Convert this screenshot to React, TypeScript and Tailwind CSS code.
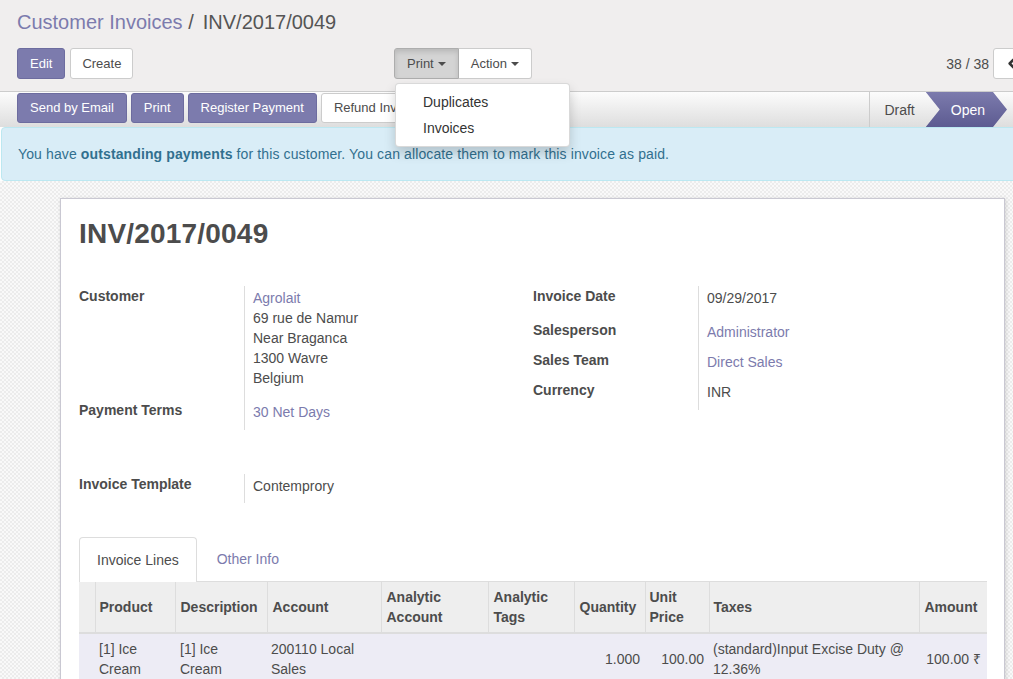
import React from "react";
import { ChevronLeft, ChevronRight } from "lucide-react";

const Caret = () => (
  <span className="ml-[4px] inline-block h-0 w-0 border-x-[4px] border-t-[4px] border-x-transparent border-t-[#4c4c4c] align-middle" />
);

const purpleBtn =
  "h-[30px] rounded-[3px] border border-[#6d6c9f] bg-[#7c7bad] px-[12px] text-[13px] text-white";
const whiteBtn =
  "h-[30px] rounded-[3px] border border-[#ccc] bg-white px-[12px] text-[13px] text-[#4c4c4c]";

const Field = ({
  label,
  children,
  pt,
  pb,
  lpt,
  lpb,
}: {
  label: string;
  children: React.ReactNode;
  pt: string;
  pb: string;
  lpt: string;
  lpb: string;
}) => (
  <div className="flex">
    <div className={`w-[165px] shrink-0 font-bold ${lpt} ${lpb}`}>{label}</div>
    <div className={`border-l border-[#ddd] pl-[8px] ${pt} ${pb}`}>{children}</div>
  </div>
);

const link = "text-[#7c7bad]";

export default function App() {
  return (
    <div className="relative h-[679px] w-[1013px] overflow-hidden bg-white font-['Liberation_Sans',Arial,sans-serif] text-[14px] leading-[20px] text-[#4c4c4c]">
      {/* control panel */}
      <div className="border-b border-[#ccc] bg-[#f0eeee] pb-[12px] pl-[17px] pr-[17px] pt-[8px]">
        <div className="h-[28px] text-[20px] leading-[28px]">
          <span className="text-[#7c7bad]">Customer Invoices</span>
          <span className="text-[#555]"> /</span>
          <span className="ml-[9px] text-[#555]">INV/2017/0049</span>
        </div>
        <div className="mt-[12px] flex h-[31px] items-stretch">
          <div className="flex w-[377px] gap-[5px]">
            <button className="h-[31px] rounded-[3px] border border-[#6d6c9f] bg-[#7c7bad] px-[12px] text-[13px] text-white">Edit</button>
            <button className="h-[31px] rounded-[3px] border border-[#ccc] bg-white px-[11px] text-[13px] text-[#4c4c4c]">Create</button>
          </div>
          <div className="flex">
            <button className="flex h-[31px] items-center rounded-l-[3px] border border-[#adadad] bg-[#d4d4d4] px-[12px] text-[13px] shadow-[inset_0_3px_5px_rgba(0,0,0,0.125)]">
              Print
              <Caret />
            </button>
            <button className="flex h-[31px] items-center rounded-r-[3px] border border-l-0 border-[#ccc] bg-white px-[12px] text-[13px]">
              Action
              <Caret />
            </button>
          </div>
          <div className="-mr-[71px] ml-auto flex items-center">
            <span className="mr-[4px] text-[14px]">38 / 38</span>
            <button className="flex h-[31px] w-[37px] items-center justify-center rounded-l-[3px] border border-[#ccc] bg-white">
              <ChevronLeft size={15} strokeWidth={4} className="text-[#333]" />
            </button>
            <button className="flex h-[31px] w-[37px] items-center justify-center rounded-r-[3px] border border-l-0 border-[#ccc] bg-white">
              <ChevronRight size={15} strokeWidth={4} className="text-[#333]" />
            </button>
          </div>
        </div>
      </div>

      {/* status bar */}
      <div className="flex h-[35px] bg-gradient-to-b from-[#fcfcfc] to-[#dedede] pl-[17px]">
        <div className="flex gap-[4px] pt-[1px]">
          <button className={purpleBtn}>Send by Email</button>
          <button className={purpleBtn}>Print</button>
          <button className={purpleBtn}>Register Payment</button>
          <button className={whiteBtn}>Refund Invoice</button>
        </div>
        <div className="ml-auto mr-[6px] flex h-full">
          <div className="flex items-center border-l border-[#ccc] pl-[14px] pr-[11px]">Draft</div>
          <div className="flex items-center bg-gradient-to-b from-[#7c7bad] to-[#5d5b91] pl-[25px] pr-[22px] text-white [clip-path:polygon(0_0,calc(100%-14px)_0,100%_50%,calc(100%-14px)_100%,0_100%,14px_50%)]">
            Open
          </div>
        </div>
      </div>

      {/* alert */}
      <div className="-mr-[10px] ml-[1px] flex h-[54px] items-center rounded-[4px] border border-[#bce8f1] bg-[#d9edf7] px-[16px] tracking-[0.12px] text-[#31708f]">
        <span>
          You have <b>outstanding payments</b> for this customer. You can allocate them to mark this invoice as paid.
        </span>
      </div>

      {/* sheet background */}
      <div className="h-[600px] bg-[repeating-conic-gradient(#ececec_0%_25%,#f9f9f9_0%_50%)] bg-size-[4px_4px] bg-[length:4px_4px] pl-[60px] pt-[17px]">
        <div className="h-[600px] w-[945px] border border-[#c9c8d2] bg-white px-[18px] pt-[18px] shadow-[1px_1px_4px_rgba(0,0,0,0.15)]">
          <h1 className="text-[28px] font-bold leading-[34px] tracking-[0.2px]">INV/2017/0049</h1>

          <div className="mt-[35px] flex">
            <div className="w-[454px]">
              <Field label="Customer" pt="pt-[2px]" pb="pb-[7px]" lpt="pt-0" lpb="pb-[9px]">
                <div className={link}>Agrolait</div>
                <div>69 rue de Namur</div>
                <div>Near Braganca</div>
                <div>1300 Wavre</div>
                <div>Belgium</div>
              </Field>
              <Field label="Payment Terms" pt="pt-[7px]" pb="pb-[8px]" lpt="pt-[5px]" lpb="pb-[10px]">
                <span className={link}>30 Net Days</span>
              </Field>
            </div>
            <div>
              <Field label="Invoice Date" pt="pt-[2px]" pb="pb-[7px]" lpt="pt-0" lpb="pb-[9px]">
                09/29/2017
              </Field>
              <Field label="Salesperson" pt="pt-[7px]" pb="pb-[5px]" lpt="pt-[5px]" lpb="pb-[7px]">
                <span className={link}>Administrator</span>
              </Field>
              <Field label="Sales Team" pt="pt-[5px]" pb="pb-[5px]" lpt="pt-[3px]" lpb="pb-[7px]">
                <span className={link}>Direct Sales</span>
              </Field>
              <Field label="Currency" pt="pt-[5px]" pb="pb-[8px]" lpt="pt-[3px]" lpb="pb-[10px]">
                INR
              </Field>
            </div>
          </div>

          <div className="mt-[44px] w-[454px]">
            <Field label="Invoice Template" pt="pt-[2px]" pb="pb-[7px]" lpt="pt-0" lpb="pb-[9px]">
              Contemprory
            </Field>
          </div>

          {/* tabs */}
          <div className="mt-[34px] flex h-[45px] w-[908px] border-b border-[#ddd]">
            <div className="-mb-[1px] flex items-center rounded-t-[4px] border border-b-0 border-[#ddd] bg-white px-[17px]">
              Invoice Lines
            </div>
            <div className="flex items-center pl-[20px] text-[#7c7bad]">Other Info</div>
          </div>

          <table className="w-[908px] table-fixed border-collapse">
            <colgroup>
              <col className="w-[16px]" />
              <col className="w-[80px]" />
              <col className="w-[92px]" />
              <col className="w-[114px]" />
              <col className="w-[107px]" />
              <col className="w-[86px]" />
              <col className="w-[71px]" />
              <col className="w-[64px]" />
              <col className="w-[210px]" />
              <col className="w-[68px]" />
            </colgroup>
            <thead>
              <tr className="h-[51px] border-b-2 border-[#ddd] bg-[#eee] text-left font-bold">
                <th className="" />
                <th className="border-l border-[#ddd] px-[4px]">Product</th>
                <th className="border-l border-[#ddd] px-[5px]">Description</th>
                <th className="border-l border-[#ddd] px-[5px]">Account</th>
                <th className="border-l border-[#ddd] px-[5px]">Analytic Account</th>
                <th className="border-l border-[#ddd] px-[5px]">Analytic Tags</th>
                <th className="border-l border-[#ddd] px-[5px]">Quantity</th>
                <th className="border-l border-[#ddd] px-[4px]">Unit Price</th>
                <th className="border-l border-[#ddd] px-[4px]">Taxes</th>
                <th className="border-l border-[#ddd] px-[5px]">Amount</th>
              </tr>
            </thead>
            <tbody>
              <tr className="bg-[#edecf5] align-middle">
                <td />
                <td className="px-[4px] py-[5px]">[1] Ice Cream</td>
                <td className="px-[5px] py-[5px]">[1] Ice Cream</td>
                <td className="px-[4px] py-[5px]">200110 Local Sales</td>
                <td className="px-[6px] py-[5px]" />
                <td className="px-[6px] py-[5px]" />
                <td className="px-[5px] py-[5px] text-right">1.000</td>
                <td className="px-[5px] py-[5px] text-right">100.00</td>
                <td className="px-[4px] py-[5px]">(standard)Input Excise Duty @ 12.36%</td>
                <td className="px-[6px] py-[5px] text-right">100.00 ₹</td>
              </tr>
            </tbody>
          </table>
        </div>
      </div>

      {/* print dropdown */}
      <div className="absolute left-[395px] top-[83px] w-[175px] rounded-[4px] border border-[rgba(0,0,0,0.15)] bg-white py-[5px] shadow-[0_6px_12px_rgba(0,0,0,0.175)]">
        <div className="px-[27px] py-[3px] text-[#333]">Duplicates</div>
        <div className="px-[27px] py-[3px] text-[#333]">Invoices</div>
      </div>
    </div>
  );
}
